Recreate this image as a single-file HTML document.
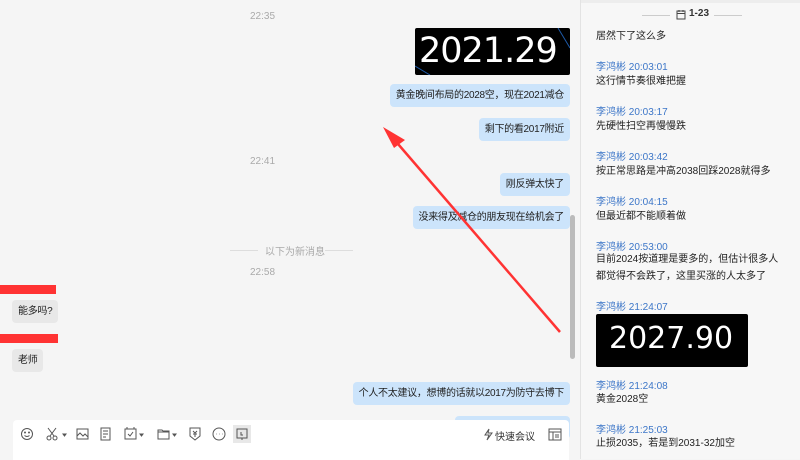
<!DOCTYPE html>
<html><head><meta charset="utf-8"><style>
*{margin:0;padding:0;box-sizing:border-box}
body{width:800px;height:459px;overflow:hidden;background:#f5f5f5;font-family:"Liberation Sans","Noto Sans CJK SC",sans-serif;font-size:10px;color:#222;position:relative}
.a{position:absolute}
.t{color:#aaa;font-size:10px}
.b{position:absolute;background:#cce4fb;border-radius:4px;height:23px;line-height:23px;padding:0 6px;white-space:nowrap;font-size:10px;letter-spacing:-0.3px}
.rr{right:230px}
.g{background:#e8e8e8}
.r{position:absolute;left:580px;top:0;width:220px;height:459px;background:#f7f7f7;border-left:1px solid #e3e3e3}
.n{position:absolute;left:15px;color:#3c76c8;font-size:10px}
.m{position:absolute;left:15px;font-size:10px;color:#222;line-height:17px}
</style></head><body>
<div class="a t" style="left:250px;top:11px">22:35</div>
<div class="a" style="left:415px;top:28px;width:155px;height:47px;background:#000;border-radius:2px;overflow:hidden">
<div style="position:absolute;left:4px;top:0;color:#fff;font-size:35px;font-family:'DejaVu Sans',sans-serif;line-height:46px;letter-spacing:-1px">2021.29</div>
<svg class="a" style="left:0;top:0" width="155" height="47"><path d="M143 0L155 20M0 38L15 47" stroke="#1e5aa8" stroke-width="1"/></svg></div>
<div class="b rr" style="top:84px">黄金晚间布局的2028空，现在2021减仓</div>
<div class="b rr" style="top:118px">剩下的看2017附近</div>
<div class="a t" style="left:250px;top:156px">22:41</div>
<div class="b rr" style="top:173px">刚反弹太快了</div>
<div class="b rr" style="top:206px">没来得及减仓的朋友现在给机会了</div>
<div class="a" style="left:230px;top:250px;width:28px;border-top:1px solid #ddd"></div>
<div class="a t" style="left:265px;top:243px">以下为新消息</div>
<div class="a" style="left:325px;top:250px;width:28px;border-top:1px solid #ddd"></div>
<div class="a t" style="left:250px;top:267px">22:58</div>
<div class="a" style="left:0;top:285px;width:56px;height:9px;background:#f33"></div>
<div class="b g" style="left:12px;top:300px">能多吗?</div>
<div class="a" style="left:0;top:334px;width:58px;height:9px;background:#f33"></div>
<div class="b g" style="left:12px;top:349px">老师</div>
<div class="b rr" style="top:382px">个人不太建议，想博的话就以2017为防守去博下</div>
<div class="b" style="left:455px;width:115px;top:416px"></div>
<div class="a" style="left:570px;top:215px;width:5px;height:144px;background:#bbb;border-radius:3px"></div>
<svg class="a" style="left:0;top:0" width="580" height="459"><line x1="560" y1="332" x2="392" y2="137" stroke="#f33" stroke-width="2.5"/><path d="M383 127L405 140L394 148Z" fill="#f33"/></svg>
<div class="a" style="left:13px;top:420px;width:556px;height:40px;background:#fff;border-radius:4px 4px 0 0"></div>
<svg class="a" style="left:13px;top:420px" width="556" height="39" fill="none" stroke="#555" stroke-width="1">
<circle cx="14" cy="14" r="5.5"/><path d="M11.5 15.5q2.5 2 5 0"/><circle cx="12" cy="12.5" r=".5"/><circle cx="16" cy="12.5" r=".5"/>
<circle cx="36" cy="18" r="2"/><circle cx="42" cy="18" r="2"/><path d="M37 16L43 8M41 16L35 8"/><path d="M50 14h3l-1.5 2z" fill="#555"/>
<rect x="64" y="9" width="11" height="10"/><path d="M64 16l3-3 3 3 2-2 3 3"/>
<rect x="88" y="8" width="9" height="12"/><path d="M90 11h5M90 14h5M90 17h3"/>
<rect x="112" y="9" width="11" height="10"/><path d="M115 14l2 2 3-4M114 7v2M121 7v2"/><path d="M127 14h3l-1.5 2z" fill="#555"/>
<path d="M145 10h4l1 1h6v8h-11z M145 12h11"/><path d="M160 14h3l-1.5 2z" fill="#555"/>
<path d="M177 8h10v8l-5 4-5-4z"/><path d="M180 11l2 2 2-2M182 13v4M180 14h4"/>
<circle cx="206" cy="14" r="6"/><path d="M203 14h.5M206 14h.5M209 14h.5"/>
<rect x="220" y="5" width="18" height="18" fill="#e8e8e8" stroke="none"/><rect x="224" y="9" width="10" height="9"/><path d="M228 12v3h2M229 18v2"/>
<path d="M476 9l-4 6h4l-2 5 5-7h-4z"/>
<rect x="536" y="9" width="12" height="11"/><path d="M536 12h12M540 12v8M542 15h4M542 17h4"/>
</svg>
<div class="a" style="left:495px;top:428px;font-size:10px;color:#333">快速会议</div>
<div class="r">
<div class="a" style="left:0;top:0;width:220px;border-top:3px solid #ededed"></div>
<div class="a" style="left:61px;top:15px;width:28px;border-top:1px solid #ccc"></div>
<svg class="a" style="left:95px;top:9px" width="10" height="11" fill="none" stroke="#444"><rect x="1" y="2" width="8" height="8"/><path d="M1 4.5h8M3 1v2M7 1v2"/></svg>
<div class="a" style="left:108px;top:8px;font-size:10px;font-weight:bold;color:#333">1-23</div>
<div class="a" style="left:133px;top:15px;width:28px;border-top:1px solid #ccc"></div>
<div class="m" style="top:28px">居然下了这么多</div>
<div class="n" style="top:58px">李鸿彬 20:03:01</div><div class="m" style="top:73px">这行情节奏很难把握</div>
<div class="n" style="top:103px">李鸿彬 20:03:17</div><div class="m" style="top:118px">先硬性扫空再慢慢跌</div>
<div class="n" style="top:148px">李鸿彬 20:03:42</div><div class="m" style="top:163px">按正常思路是冲高2038回踩2028就得多</div>
<div class="n" style="top:193px">李鸿彬 20:04:15</div><div class="m" style="top:208px">但最近都不能顺着做</div>
<div class="n" style="top:238px">李鸿彬 20:53:00</div><div class="m" style="top:251px;width:192px">目前2024按道理是要多的，但估计很多人都觉得不会跌了，这里买涨的人太多了</div>
<div class="n" style="top:298px">李鸿彬 21:24:07</div>
<div class="a" style="left:15px;top:314px;width:152px;height:53px;background:#000;border-radius:2px;color:#fff;font-family:'DejaVu Sans',sans-serif;font-size:30px;line-height:50px;padding-left:13px">2027.90</div>
<div class="n" style="top:377px">李鸿彬 21:24:08</div><div class="m" style="top:391px">黄金2028空</div>
<div class="n" style="top:421px">李鸿彬 21:25:03</div><div class="m" style="top:435px">止损2035，若是到2031-32加空</div>
</div>
</body></html>
